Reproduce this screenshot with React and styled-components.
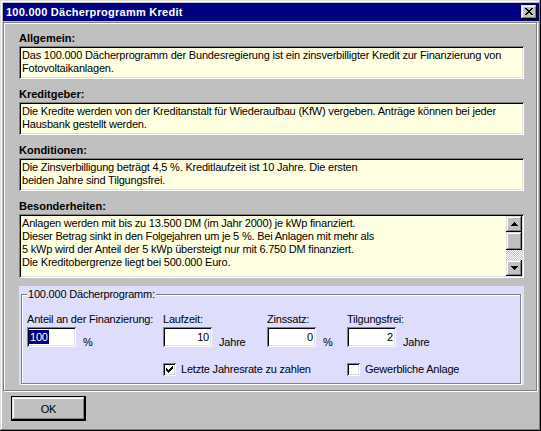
import React from "react";
import styled, { createGlobalStyle } from "styled-components";

const GlobalStyle = createGlobalStyle`
  html, body {
    margin: 0;
    padding: 0;
    background: #c0c0c0;
  }
  body {
    font-family: "Liberation Sans", Arial, sans-serif;
    font-size: 11px;
    letter-spacing: -0.2px;
    color: #000;
  }
`;

const raised = `
  box-shadow: inset -1px -1px #000, inset 1px 1px #dfdfdf,
    inset -2px -2px #808080, inset 2px 2px #fff;
`;
const sunken = `
  box-shadow: inset 1px 1px #808080, inset -1px -1px #fff,
    inset 2px 2px #000, inset -2px -2px #dfdfdf;
`;

const CLOSE = ["xx....xx", ".xx..xx.", "..xxxx..", "...xx...", "..xxxx..", ".xx..xx.", "xx....xx"];
const UP = ["...x...", "..xxx..", ".xxxxx.", "xxxxxxx"];
const DOWN = [...UP].reverse();
const CHECK = ["......x", ".....xx", "x...xxx", "xx.xxx.", "xxxxx..", ".xxx...", "..x...."];

// tiny pixel glyphs (close cross, arrows, check mark)
const Glyph = ({ rows, color = "#000" }) => (
  <svg width={rows[0].length} height={rows.length} shapeRendering="crispEdges">
    {rows.flatMap((r, y) =>
      [...r].map((c, x) =>
        c === "x" ? <rect key={`${x}-${y}`} x={x} y={y} width="1" height="1" fill={color} /> : null
      )
    )}
  </svg>
);

const App = () => {
  return (
    <>
      <GlobalStyle />
      <Window>
        <TitleBar>
          <Title>100.000 Dächerprogramm Kredit</Title>
          <CloseButton>
            <Glyph rows={CLOSE} />
          </CloseButton>
        </TitleBar>

        <Panel>
          <Section>
            <Label>Allgemein:</Label>
            <TextBox $height={33}>
              <TextLines>
                Das 100.000 Dächerprogramm der Bundesregierung ist ein zinsverbilligter Kredit zur Finanzierung von
                <br />
                Fotovoltaikanlagen.
              </TextLines>
            </TextBox>
          </Section>
          <Section>
            <Label>Kreditgeber:</Label>
            <TextBox $height={33}>
              <TextLines>
                Die Kredite werden von der Kreditanstalt für Wiederaufbau (KfW) vergeben. Anträge können bei jeder
                <br />
                Hausbank gestellt werden.
              </TextLines>
            </TextBox>
          </Section>
          <Section>
            <Label>Konditionen:</Label>
            <TextBox $height={33}>
              <TextLines>
                Die Zinsverbilligung beträgt 4,5 %. Kreditlaufzeit ist 10 Jahre. Die ersten
                <br />
                beiden Jahre sind Tilgungsfrei.
              </TextLines>
            </TextBox>
          </Section>
          <Section $last>
            <Label>Besonderheiten:</Label>
            <TextBox $height={64}>
              <TextLines>
                Anlagen werden mit bis zu 13.500 DM (im Jahr 2000) je kWp finanziert.
                <br />
                Dieser Betrag sinkt in den Folgejahren um je 5 %. Bei Anlagen mit mehr als
                <br />
                5 kWp wird der Anteil der 5 kWp übersteigt nur mit 6.750 DM finanziert.
                <br />
                Die Kreditobergrenze liegt bei 500.000 Euro.
              </TextLines>
              <ScrollBar>
                <ScrollButton>
                  <Glyph rows={UP} />
                </ScrollButton>
                <Thumb />
                <Track />
                <ScrollButton>
                  <Glyph rows={DOWN} />
                </ScrollButton>
              </ScrollBar>
            </TextBox>
          </Section>

          <Group>
            <Frame>
              <Legend>100.000 Dächerprogramm:</Legend>
              <FieldGrid>
                <Field>
                  <FieldLabel>Anteil an der Finanzierung:</FieldLabel>
                  <InputRow>
                    <EditBox $align="left">
                      <Selected>100</Selected>
                    </EditBox>
                    <Unit>%</Unit>
                  </InputRow>
                </Field>
                <Field>
                  <FieldLabel>Laufzeit:</FieldLabel>
                  <InputRow>
                    <EditBox $align="right">10</EditBox>
                    <Unit>Jahre</Unit>
                  </InputRow>
                </Field>
                <Field>
                  <FieldLabel>Zinssatz:</FieldLabel>
                  <InputRow>
                    <EditBox $align="right">0</EditBox>
                    <Unit>%</Unit>
                  </InputRow>
                </Field>
                <Field>
                  <FieldLabel>Tilgungsfrei:</FieldLabel>
                  <InputRow>
                    <EditBox $align="right">2</EditBox>
                    <Unit>Jahre</Unit>
                  </InputRow>
                </Field>

                <CheckItem $column="2 / span 2">
                  <CheckBox>
                    <Glyph rows={CHECK} />
                  </CheckBox>
                  Letzte Jahresrate zu zahlen
                </CheckItem>
                <CheckItem $column="4">
                  <CheckBox />
                  Gewerbliche Anlage
                </CheckItem>
              </FieldGrid>
            </Frame>
          </Group>
        </Panel>

        <Footer>
          <Button>OK</Button>
        </Footer>
      </Window>
    </>
  );
};

const Window = styled.div`
  width: 541px;
  height: 431px;
  box-sizing: border-box;
  padding: 3px 2px 3px 3px;
  background: #c0c0c0;
  display: flex;
  flex-direction: column;
  ${raised}
`;
const TitleBar = styled.div`
  height: 18px;
  background: #000080;
  display: flex;
  align-items: center;
  justify-content: space-between;
  padding: 0 2px 0 3px;
`;
const Title = styled.div`
  color: #fff;
  font-weight: bold;
  letter-spacing: 0.25px;
  line-height: 18px;
`;
const CloseButton = styled.div`
  width: 16px;
  height: 14px;
  background: #c0c0c0;
  display: flex;
  align-items: center;
  justify-content: center;
  padding-bottom: 1px;
  box-sizing: border-box;
  ${raised}
`;
const Panel = styled.div`
  margin: 1px 2px 0 0;
  padding: 9px 12px 5px 15px;
  border: 1px solid #808080;
  box-shadow: inset 1px 1px #fff, 1px 1px #fff;
  display: flex;
  flex-direction: column;
`;
const Section = styled.div`
  display: flex;
  flex-direction: column;
  margin-bottom: ${(p) => (p.$last ? 8 : 9)}px;
`;
const Label = styled.div`
  font-weight: bold;
  letter-spacing: 0;
  line-height: 13px;
  margin-bottom: 1px;
`;
const TextBox = styled.div`
  height: ${(p) => p.$height}px;
  box-sizing: border-box;
  padding: 2px;
  background: #ffffe1;
  display: flex;
  ${sunken}
`;
const TextLines = styled.div`
  flex: 1;
  padding: 1px 1px;
  line-height: 13px;
  white-space: nowrap;
  overflow: hidden;
`;
const ScrollBar = styled.div`
  width: 16px;
  display: flex;
  flex-direction: column;
`;
const ScrollButton = styled.div`
  width: 16px;
  height: 16px;
  background: #c0c0c0;
  display: flex;
  align-items: center;
  justify-content: center;
  ${raised}
`;
const Thumb = styled.div`
  height: 18px;
  background: #c0c0c0;
  ${raised}
`;
const Track = styled.div`
  flex: 1;
  background: repeating-conic-gradient(#c0c0c0 0% 25%, #fff 0% 50%) 0 0 / 2px 2px;
`;
const Group = styled.div`
  background: #dedefc;
  padding: 2px 3px 1px 2px;
`;
const Frame = styled.fieldset`
  margin: 0;
  min-width: 0;
  padding: 12px 4px 7px 5px;
  border: 1px solid #808080;
  box-shadow: inset 1px 1px #fff, 1px 1px #fff;
`;
const Legend = styled.legend`
  padding: 0 1px;
  line-height: 13px;
  background: #dedefc;
`;
const FieldGrid = styled.div`
  display: grid;
  grid-template-columns: 136px 104px 80px 1fr;
  row-gap: 16px;
`;
const Field = styled.div`
  display: flex;
  flex-direction: column;
`;
const FieldLabel = styled.div`
  line-height: 13px;
  margin-bottom: 1px;
`;
const InputRow = styled.div`
  display: flex;
  align-items: flex-end;
  gap: 7px;
`;
const EditBox = styled.div`
  width: 49px;
  height: 20px;
  box-sizing: border-box;
  padding: 0 3px 0 2px;
  background: #fff;
  line-height: 20px;
  text-align: ${(p) => p.$align};
  ${sunken}
`;
const Selected = styled.span`
  background: #000080;
  color: #fff;
  padding: 1px 1px;
`;
const Unit = styled.div`
  line-height: 13px;
  margin-bottom: -2px;
`;
const CheckItem = styled.div`
  grid-column: ${(p) => p.$column};
  display: flex;
  align-items: center;
  gap: 5px;
  line-height: 13px;
`;
const CheckBox = styled.div`
  width: 13px;
  height: 13px;
  box-sizing: border-box;
  background: #fff;
  display: flex;
  align-items: center;
  justify-content: center;
  ${sunken}
`;
const Footer = styled.div`
  padding: 5px 0 0 8px;
`;
const Button = styled.div`
  width: 75px;
  height: 25px;
  box-sizing: border-box;
  border: 1px solid #000;
  background: #c0c0c0;
  display: flex;
  align-items: center;
  justify-content: center;
  ${raised}
`;

export default App;
